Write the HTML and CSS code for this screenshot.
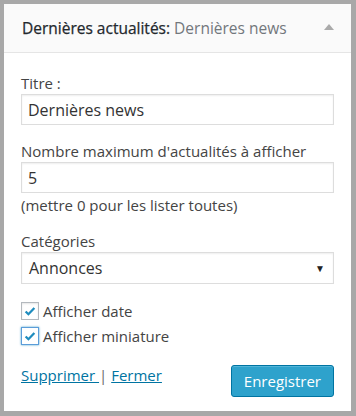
FILE: index.html
```html
<!DOCTYPE html>
<html lang="fr">
<head>
    <meta charset="UTF-8">
    <title>Widget - Dernières actualités</title>
    <link rel="stylesheet" href="styles.css">
</head>
<body>
    <div class="widget">
        <div class="widget-top">
            <div class="widget-title">Dernières actualités: <span class="in-title">Dernières news</span></div>
            <span class="toggle"></span>
        </div>

        <form class="widget-inside">
            <!-- Titre -->
            <label class="field-label" for="title">Titre :</label>
            <input class="field" id="title" type="text" value="Dernières news">

            <!-- Nombre -->
            <label class="field-label label-gap" for="number">Nombre maximum d'actualités à afficher</label>
            <input class="field" id="number" type="text" value="5">
            <div class="hint">(mettre 0 pour les lister toutes)</div>

            <!-- Catégories -->
            <label class="field-label label-gap" for="cat">Catégories</label>
            <div class="select">
                <span>Annonces</span>
                <span class="select-arrow">▼</span>
            </div>

            <div class="checks">
                <label class="check"><span class="box"><svg viewBox="0 0 16 16"><path d="M3 8.5l3.2 3.2L13 4.5"/></svg></span>Afficher date</label>
                <label class="check"><span class="box box-focus"><svg viewBox="0 0 16 16"><path d="M3 8.5l3.2 3.2L13 4.5"/></svg></span>Afficher miniature</label>
            </div>

            <div class="actions">
                <div class="links"><a href="#">Supprimer </a> | <a href="#">Fermer</a></div>
                <button type="button" class="button-primary">Enregistrer</button>
            </div>
        </form>
    </div>
</body>
</html>
```

FILE: styles.css
```css
:root {
    --frame-color: #a8a8a8;
    --text-color: #444444;
    --muted-color: #72777c;
    --link-color: #0074a2;
    --border-color: #dddddd;
    --primary-bg: #2ea2cc;
    --primary-border: #0074a2;
}

* {
    margin: 0;
    padding: 0;
    box-sizing: border-box;
}

html, body {
    height: 100%;
}

body {
    font-family: 'Open Sans', 'Liberation Sans', sans-serif;
    font-size: 15px;
    line-height: 20px;
    color: var(--text-color);
    background: var(--frame-color);
    padding: 4px 5px 5px 4px;
}

.widget {
    background: #ffffff;
    height: 100%;
}

/* Шапка */
.widget-top {
    background: #fafafa;
    border-bottom: 1px solid #e5e5e5;
    height: 49px;
    display: flex;
    align-items: center;
    justify-content: space-between;
    padding: 0 17px 0 18px;
}

.widget-title {
    font-weight: 400;
    color: #23282d;
    font-size: 15.5px;
    -webkit-text-stroke: 0.25px #23282d;
}

.in-title {
    color: var(--muted-color);
    -webkit-text-stroke: 0;
}

.toggle {
    width: 0;
    height: 0;
    border-left: 5px solid transparent;
    border-right: 5px solid transparent;
    border-bottom: 6px solid #aaaaaa;
    margin-top: -2px;
}

/* Форма */
.widget-inside {
    padding: 20px 17px 0 17px;
    display: block;
}

.field-label {
    display: block;
    margin-bottom: 1px;
}

.label-gap {
    margin-top: 16px;
}

.field {
    display: block;
    width: 100%;
    height: 31px;
    border: 1px solid var(--border-color);
    box-shadow: inset 0 1px 2px rgba(0,0,0,0.07);
    font-family: inherit;
    font-size: 16px;
    color: #333;
    padding: 0 6px;
    outline: none;
}

.hint {
    margin-top: 2px;
}

.select {
    display: flex;
    align-items: center;
    justify-content: space-between;
    height: 32px;
    border: 1px solid var(--border-color);
    box-shadow: inset 0 1px 2px rgba(0,0,0,0.07);
    font-size: 16px;
    color: #333;
    padding: 0 8px 0 7px;
}

.select-arrow {
    font-size: 10px;
    color: #222;
}

/* Чекбоксы */
.checks {
    margin-top: 17px;
    display: flex;
    flex-direction: column;
    gap: 5px;
}

.check {
    display: flex;
    align-items: center;
    gap: 4px;
}

.box {
    width: 18px;
    height: 18px;
    border: 1px solid #b4b9be;
    box-shadow: inset 0 1px 2px rgba(0,0,0,0.1);
    display: flex;
    align-items: center;
    justify-content: center;
}

.box-focus {
    border-color: #5b9dd9;
    box-shadow: 0 0 2px rgba(30,140,190,0.8);
}

.box svg {
    width: 14px;
    height: 14px;
    fill: none;
    stroke: #1e8cbe;
    stroke-width: 2.6;
}

/* Кнопки */
.actions {
    margin-top: 19px;
    display: flex;
    justify-content: space-between;
    align-items: flex-start;
}

.links {
    color: #666;
}

.links a {
    color: var(--link-color);
}

.button-primary {
    font-family: inherit;
    font-size: 15px;
    color: #fff;
    background: var(--primary-bg);
    border: 1px solid var(--primary-border);
    border-radius: 3px;
    box-shadow: inset 0 1px 0 rgba(120,200,230,0.5);
    height: 32px;
    padding: 0 12px;
    cursor: pointer;
}
```
